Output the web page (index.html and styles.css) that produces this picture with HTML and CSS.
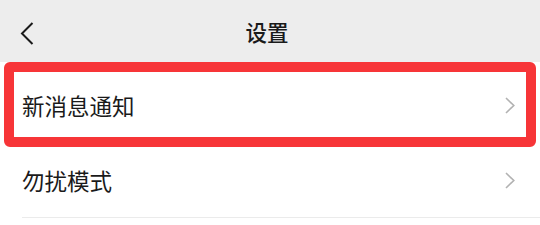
FILE: index.html
```html
<!DOCTYPE html>
<html lang="zh">
<head>
<meta charset="utf-8">
<link rel="stylesheet" href="styles.css">
</head>
<body>
<div class="page">
  <header class="topbar">
    <span class="back">
      <svg width="14" height="23" viewBox="0 0 14 23"><polyline points="12.5,1 2,11.5 12.5,22" fill="none" stroke="#1a1a1a" stroke-width="2"/></svg>
    </span>
    <h1 class="title">设置</h1>
  </header>
  <ul class="list">
    <li class="row row-first">
      <span class="label">新消息通知</span>
      <svg class="chev" width="10" height="17" viewBox="0 0 10 17"><polyline points="1,1 8.8,8.5 1,16" fill="none" stroke="#b2b2b2" stroke-width="1.6"/></svg>
      <span class="highlight"></span>
    </li>
    <li class="row row-second">
      <span class="label">勿扰模式</span>
      <svg class="chev" width="10" height="17" viewBox="0 0 10 17"><polyline points="1,1 8.8,8.5 1,16" fill="none" stroke="#b2b2b2" stroke-width="1.6"/></svg>
    </li>
  </ul>
</div>
</body>
</html>
```
FILE: styles.css
```css
* { box-sizing: border-box; }
html, body { margin: 0; padding: 0; background: #ffffff; }
body {
  font-family: "Noto Sans CJK SC", "Noto Sans", sans-serif;
  color: #1a1a1a;
  width: 540px;
  height: 225px;
  overflow: hidden;
}
.topbar {
  height: 62px;
  background: #ededed;
  display: flex;
  align-items: center;
  justify-content: center;
  position: relative;
}
.back {
  position: absolute;
  left: 20px;
  top: 22px;
  display: flex;
}
.title {
  margin: 0;
  font-size: 21.5px;
  font-weight: 500;
  line-height: 1;
  color: #1a1a1a;
  padding-right: 6px;
  padding-top: 2px;
}
.list {
  list-style: none;
  margin: 0;
  padding: 0;
}
.row {
  display: flex;
  align-items: center;
  justify-content: space-between;
  padding: 0 25px 0 22px;
  position: relative;
}
.row-first { height: 85px; padding-top: 2px; }
.row-second {
  height: 71px;
  border-bottom: 1px solid #ebebeb;
  margin-left: 22px;
  padding-left: 0;
  padding-bottom: 4px;
}
.label {
  font-size: 22.5px;
  line-height: 1;
}
.highlight {
  position: absolute;
  left: 4px;
  right: 4px;
  top: 0;
  bottom: 0;
  border: 10.5px solid #f73538;
  border-radius: 6px;
  pointer-events: none;
}
```
